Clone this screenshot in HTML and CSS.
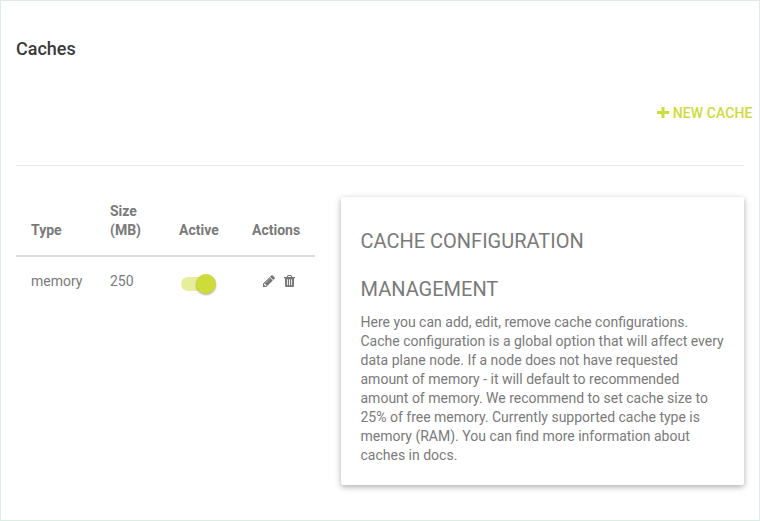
FILE: index.html
```html
<!DOCTYPE html>
<html lang="en">
<head>
<meta charset="utf-8">
<title>Caches</title>
<link rel="stylesheet" href="styles.css">
</head>
<body>
<main class="page">
  <h1 class="title">Caches</h1>
  <div class="toolbar">
    <button class="new-cache">
      <svg class="plus" viewBox="0 0 12 11"><path d="M4.500 0h3v4H12v3H7.500v4h-3V7H0V4h4.500z"/></svg>
      <span>NEW CACHE</span>
    </button>
  </div>
  <div class="content">
    <table class="caches">
      <thead>
        <tr><th class="c-type">Type</th><th class="c-size">Size<br>(MB)</th><th class="c-active">Active</th><th class="c-actions">Actions</th></tr>
      </thead>
      <tbody>
        <tr>
          <td>memory</td>
          <td>250</td>
          <td><div class="switch"><span class="knob"></span></div></td>
          <td>
            <div class="actions">
              <svg class="pencil" viewBox="0 0 1536 1536"><path d="M363 1408l91-91-235-235-91 91v107h128v128zM886 480q0-22-22-22-10 0-17 7l-542 542q-7 7-7 17 0 22 22 22 10 0 17-7l542-542q7-7 7-17zM832 288l416 416-832 832H0v-416zM1515 384q0 53-37 90l-166 166-416-416 166-165q36-38 90-38 53 0 91 38l235 234q37 39 37 91z"/></svg>
              <svg class="trash" viewBox="0 0 11 12"><path fill-rule="evenodd" d="M0 2h2.700l.6-1.300Q3.600 0 4.300 0h2.400q.7 0 1 .7L8.300 2H11v1.200h-1V10.700Q10 12 8.700 12H2.300Q1 12 1 10.700V3.200H0zM3.900 2h3.200l-.4-.9H4.300zM2.900 4.200v6h.9v-6zM5.050 4.200v6h.9v-6zM7.200 4.200v6h.9v-6z"/></svg>
            </div>
          </td>
        </tr>
      </tbody>
    </table>
    <section class="card">
      <h2 class="card-title">CACHE CONFIGURATION<br>MANAGEMENT</h2>
      <p class="card-text">Here you can add, edit, remove cache configurations.<br>Cache configuration is a global option that will affect every<br>data plane node. If a node does not have requested<br>amount of memory - it will default to recommended<br>amount of memory. We recommend to set cache size to<br>25% of free memory. Currently supported cache type is<br>memory (RAM). You can find more information about<br>caches in docs.</p>
    </section>
  </div>
</main>
</body>
</html>
```
FILE: styles.css
```css
* { box-sizing: border-box; }
body {
  margin: 0;
  font-family: Roboto, sans-serif;
  font-size: 14px;
  line-height: 19px;
  color: #7a7a7a;
  background: #fff;
}
.page {
  height: 521px;
  border: 1px solid #dcede6;
  padding: 36px 15px 0;
}
.title {
  margin: 0;
  font-size: 18px;
  font-weight: 500;
  line-height: 24px;
  color: #3a3a3a;
}
.toolbar {
  height: 105px;
  padding-top: 43px;
  border-bottom: 1px solid #ebebeb;
  display: flex;
  justify-content: flex-end;
  align-items: flex-start;
}
.new-cache {
  display: flex;
  align-items: flex-start;
  gap: 3.500px;
  margin-right: -8.500px;
  padding: 0;
  border: 0;
  background: none;
  font: 500 14px/19px Roboto, sans-serif;
  letter-spacing: .1px;
  color: #cddc39;
}
.plus { width: 12px; height: 11px; margin-top: 3px; fill: currentColor; }
.content {
  display: flex;
  align-items: flex-start;
  gap: 26px;
  padding-top: 31px;
}
.caches {
  width: 299px;
  table-layout: fixed;
  border-collapse: collapse;
}
th, td { padding: 0; text-align: left; }
th { height: 59px; padding-bottom: 15px; vertical-align: bottom; font-weight: 700; border-bottom: 2px solid #dcdcdc; }
td { padding-top: 15px; vertical-align: top; }
th:first-child, td:first-child { padding-left: 15px; }
.c-type { width: 94px; }
.c-size { width: 69px; }
.c-active { width: 73px; }
.switch {
  width: 34px;
  height: 14px;
  margin: 5px 0 0 2px;
  border-radius: 7px;
  background: #e6ee9c;
  display: flex;
  align-items: center;
  justify-content: flex-end;
}
.knob {
  flex: none;
  width: 20px;
  height: 20px;
  margin-right: -1px;
  border-radius: 50%;
  background: #cddc39;
  box-shadow: 0 1px 2px rgba(0,0,0,.35);
}
.actions { display: flex; gap: 9px; padding: 3px 0 0 11px; fill: #757575; }
.pencil { width: 12px; height: 12px; }
.trash { width: 11px; height: 12px; }
.card {
  width: 403px;
  height: 288px;
  padding: 20px 19.500px;
  border-radius: 2px;
  background: #fff;
  box-shadow: 0 2px 5px rgba(0,0,0,.22), 0 2px 10px rgba(0,0,0,.12);
}
.card-title {
  margin: 0;
  font-size: 20px;
  font-weight: 400;
  line-height: 48px;
}
.card-text { margin: 0; white-space: nowrap; }
```
